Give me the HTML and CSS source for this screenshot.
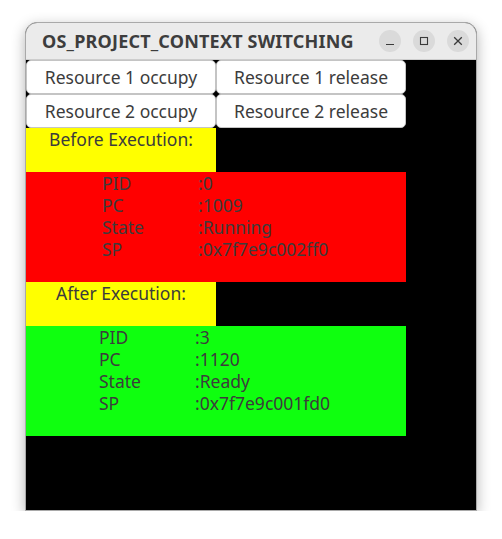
FILE: index.html
```html
<!DOCTYPE html>
<html>
<head>
<meta charset="utf-8">
<link rel="stylesheet" href="styles.css">
</head>
<body>
<div class="window">
  <div class="titlebar">
    <div class="title">OS_PROJECT_CONTEXT SWITCHING</div>
    <div class="controls">
      <div class="ctl"><svg width="22" height="22" viewBox="0 0 22 22"><line x1="7" y1="14.5" x2="15" y2="14.5" stroke="#3a3a3a" stroke-width="1.2"/></svg></div>
      <div class="ctl"><svg width="22" height="22" viewBox="0 0 22 22"><rect x="7.5" y="7.5" width="7" height="7" fill="none" stroke="#3a3a3a" stroke-width="1.1"/></svg></div>
      <div class="ctl"><svg width="22" height="22" viewBox="0 0 22 22"><path d="M7.2 7.2 L14.8 14.8 M14.8 7.2 L7.2 14.8" stroke="#3a3a3a" stroke-width="1.3"/></svg></div>
    </div>
  </div>
  <div class="content">
    <div class="buttons">
      <div class="btn">Resource 1 occupy</div>
      <div class="btn">Resource 1 release</div>
      <div class="btn">Resource 2 occupy</div>
      <div class="btn">Resource 2 release</div>
    </div>
    <div class="label">Before Execution:</div>
    <div class="info red">
      <div class="k">PID</div><div class="v">:0</div>
      <div class="k">PC</div><div class="v">:1009</div>
      <div class="k">State</div><div class="v">:Running</div>
      <div class="k">SP</div><div class="v">:0x7f7e9c002ff0</div>
    </div>
    <div class="label">After Execution:</div>
    <div class="info green">
      <div class="k">PID</div><div class="v">:3</div>
      <div class="k">PC</div><div class="v">:1120</div>
      <div class="k">State</div><div class="v">:Ready</div>
      <div class="k">SP</div><div class="v">:0x7f7e9c001fd0</div>
    </div>
  </div>
</div>
</body>
</html>
```
FILE: styles.css
```css
html, body {
  margin: 0;
  padding: 0;
  background: #ffffff;
}
body {
  font-family: "Noto Sans", "DejaVu Sans", sans-serif;
  color: #3c3c3c;
}
.window {
  margin: 22px 0 0 25px;
  width: 450px;
  border: 1px solid #a9a9a9;
  border-radius: 12px 12px 0 0;
  box-shadow: 0 4px 14px rgba(0, 0, 0, 0.3);
  overflow: hidden;
  background: #000;
}
.titlebar {
  height: 36px;
  background: #ebebeb;
  border-bottom: 1px solid #cdcdcd;
  display: flex;
  align-items: center;
  justify-content: space-between;
  padding: 0 7px 0 16px;
}
.title {
  font-weight: bold;
  font-size: 18px;
  color: #3d3d3d;
  letter-spacing: 0.2px;
}
.controls {
  display: flex;
  gap: 12px;
}
.ctl {
  width: 22px;
  height: 22px;
  border-radius: 50%;
  background: #dadada;
}
.ctl svg {
  display: block;
}
.content {
  height: 450px;
  background: #000;
}
.buttons {
  display: grid;
  grid-template-columns: 190px 190px;
  grid-auto-rows: 34px;
}
.btn {
  background: #fff;
  border: 1px solid #c4c4c4;
  border-radius: 5px;
  display: flex;
  align-items: center;
  justify-content: center;
  font-size: 17.5px;
  color: #3c3c3c;
}
.label {
  width: 190px;
  height: 44px;
  background: #ffff00;
  text-align: center;
  font-size: 17.5px;
  line-height: 22px;
  box-sizing: border-box;
}
.info {
  width: 380px;
  height: 110px;
  box-sizing: border-box;
  display: grid;
  grid-template-columns: 96px auto;
  grid-auto-rows: 22px;
  align-content: start;
  font-size: 17.5px;
  line-height: 22px;
}
.red {
  background: #ff0000;
  padding: 0 0 0 76px;
}
.green {
  background: #0fff0f;
  padding: 0 0 0 73px;
}
```
